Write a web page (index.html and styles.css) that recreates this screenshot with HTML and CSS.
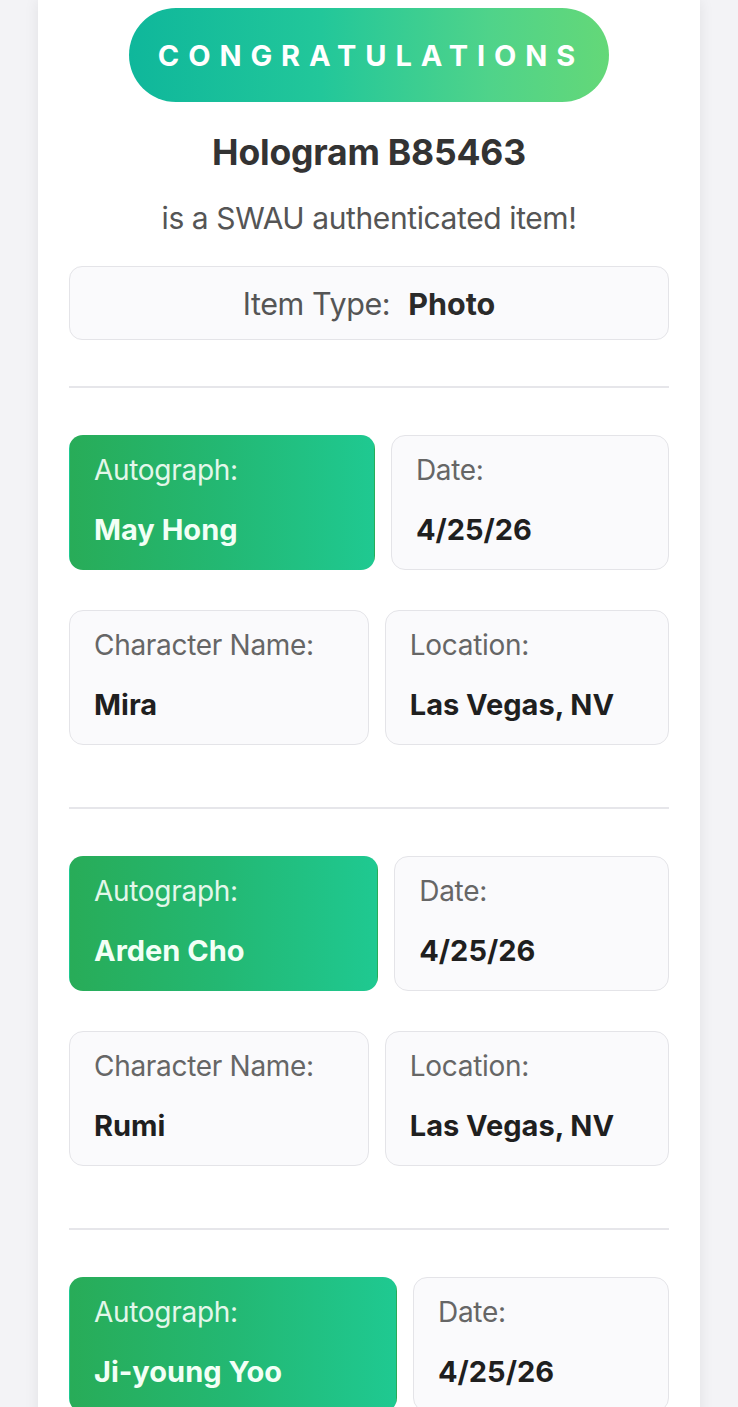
FILE: index.html
```html
<!DOCTYPE html>
<html>
<head>
<meta charset="utf-8">
<link rel="stylesheet" href="styles.css">
</head>
<body>
<div class="page">
  <main class="card">
    <div class="badge">CONGRATULATIONS</div>
    <h1 class="title">Hologram B85463</h1>
    <p class="subtitle">is a SWAU authenticated item!</p>
    <div class="type-box"><span class="type-label">Item Type:</span><span class="type-value">Photo</span></div>

    <section class="group">
      <div class="row">
        <div class="cell green"><div class="label">Autograph:</div><div class="value">May Hong</div></div>
        <div class="cell"><div class="label">Date:</div><div class="value">4/25/26</div></div>
      </div>
      <div class="row">
        <div class="cell"><div class="label">Character Name:</div><div class="value">Mira</div></div>
        <div class="cell"><div class="label">Location:</div><div class="value">Las Vegas, NV</div></div>
      </div>
    </section>

    <section class="group">
      <div class="row">
        <div class="cell green"><div class="label">Autograph:</div><div class="value">Arden Cho</div></div>
        <div class="cell"><div class="label">Date:</div><div class="value">4/25/26</div></div>
      </div>
      <div class="row">
        <div class="cell"><div class="label">Character Name:</div><div class="value">Rumi</div></div>
        <div class="cell"><div class="label">Location:</div><div class="value">Las Vegas, NV</div></div>
      </div>
    </section>

    <section class="group">
      <div class="row">
        <div class="cell green"><div class="label">Autograph:</div><div class="value">Ji-young Yoo</div></div>
        <div class="cell"><div class="label">Date:</div><div class="value">4/25/26</div></div>
      </div>
      <div class="row">
        <div class="cell"><div class="label">Character Name:</div><div class="value">Celine</div></div>
        <div class="cell"><div class="label">Location:</div><div class="value">Las Vegas, NV</div></div>
      </div>
    </section>
  </main>
</div>
</body>
</html>
```
FILE: styles.css
```css
html, body {
  margin: 0;
  padding: 0;
}
body {
  background: #f3f3f6;
  font-family: Inter, "Noto Sans", "Liberation Sans", sans-serif;
  color: #222;
  overflow: hidden;
}
.page {
  padding-left: 38px;
  width: 662px;
}
.card {
  background: #ffffff;
  box-shadow: 0 0 14px rgba(0, 0, 0, 0.08);
  padding: 8px 31px 60px 31px;
  display: flex;
  flex-direction: column;
  align-items: stretch;
}
.badge {
  align-self: center;
  width: 480px;
  height: 94px;
  border-radius: 47px;
  background: linear-gradient(90deg, #0fb79b 0%, #22c79a 40%, #4fd38a 75%, #64d878 100%);
  color: #ffffff;
  font-weight: 700;
  font-size: 29px;
  letter-spacing: 8.9px;
  display: flex;
  align-items: center;
  justify-content: center;
  padding-left: 4px;
  box-sizing: border-box;
}
.title {
  margin: 31px 0 0 0;
  text-align: center;
  font-size: 35.5px;
  line-height: 40px;
  font-weight: 700;
  color: #333333;
  letter-spacing: -0.2px;
}
.subtitle {
  margin: 28px 0 0 0;
  text-align: center;
  font-size: 30px;
  line-height: 34px;
  color: #555555;
  letter-spacing: -0.4px;
}
.type-box {
  margin-top: 31px;
  height: 74px;
  box-sizing: border-box;
  border: 1px solid #e4e4e8;
  border-radius: 13px;
  background: #fafafc;
  display: flex;
  align-items: center;
  justify-content: center;
  gap: 18px;
}
.type-label {
  font-size: 30.5px;
  color: #555555;
  letter-spacing: -0.4px;
}
.type-value {
  font-size: 30.5px;
  font-weight: 700;
  color: #2a2a2a;
}
.group {
  margin-top: 46px;
  border-top: 2px solid #e6e6ea;
  padding-top: 47px;
  padding-bottom: 16px;
  display: flex;
  flex-direction: column;
  gap: 40px;
}
.row {
  display: flex;
  gap: 16px;
}
.cell {
  flex: 1 1 auto;
  height: 135px;
  box-sizing: border-box;
  padding: 17px 24px 0 24px;
  border: 1px solid #e4e4e8;
  border-radius: 14px;
  background: #fafafc;
  display: flex;
  flex-direction: column;
  gap: 26px;
  white-space: nowrap;
}
.label {
  font-size: 28px;
  line-height: 34px;
  color: #666666;
  letter-spacing: -0.3px;
}
.value {
  font-size: 29px;
  line-height: 34px;
  font-weight: 700;
  color: #1f1f1f;
}
.cell.green {
  background: linear-gradient(90deg, #28ac58 0%, #23b873 50%, #1fc991 100%);
  border-color: transparent;
}
.cell.green .label {
  color: #e3f7ea;
}
.cell.green .value {
  color: #f2fff6;
}
```
